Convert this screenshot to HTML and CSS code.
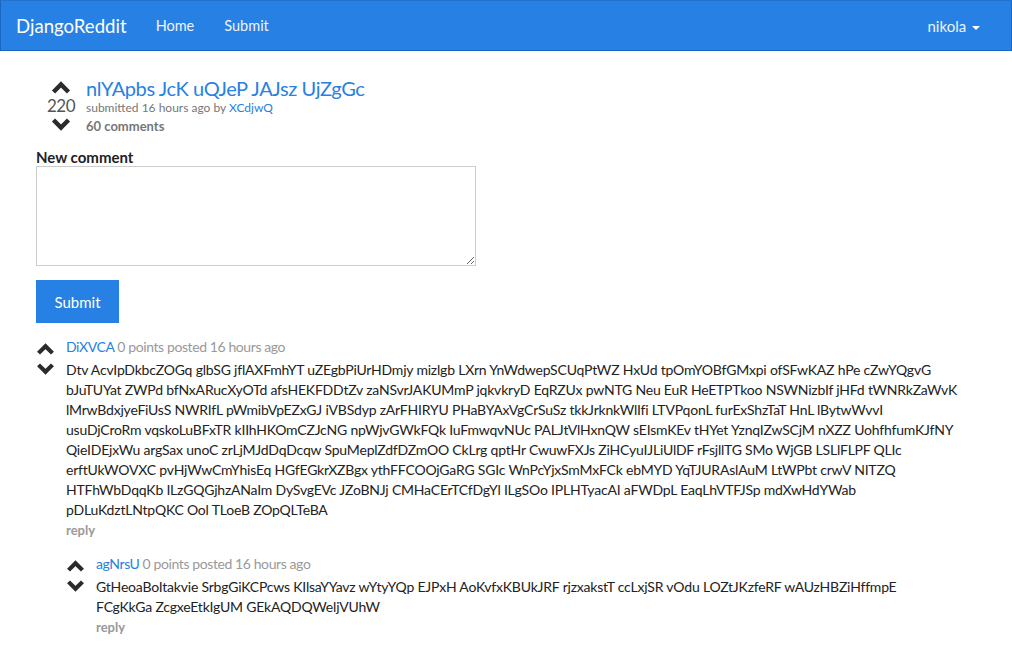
FILE: index.html
```html
<!DOCTYPE html>
<html lang="en">
<head>
    <meta charset="UTF-8">
    <meta name="viewport" content="width=device-width, initial-scale=1.0">
    <title>DjangoReddit</title>
    <link rel="stylesheet" href="styles.css">
</head>
<body>
    <nav class="navbar">
        <a class="brand" href="#">DjangoReddit</a>
        <ul class="nav-links">
            <li><a href="#">Home</a></li>
            <li><a href="#">Submit</a></li>
        </ul>
        <a class="user-menu" href="#">nikola <span class="caret"></span></a>
    </nav>

    <div class="container">
        <div class="post">
            <div class="vote">
                <svg class="arrow" viewBox="0 0 20 14"><polyline points="2.5,12 10,4.5 17.5,12"/></svg>
                <span class="score">220</span>
                <svg class="arrow" viewBox="0 0 20 14"><polyline points="2.5,2 10,9.5 17.5,2"/></svg>
            </div>
            <div class="post-info">
                <a class="post-title" href="#">nlYApbs JcK uQJeP JAJsz UjZgGc</a>
                <div class="post-meta">submitted 16 hours ago by <a href="#">XCdjwQ</a></div>
                <a class="post-comments" href="#">60 comments</a>
            </div>
        </div>

        <form class="comment-form">
            <label for="comment">New comment</label>
            <textarea id="comment" rows="5"></textarea>
            <button type="button" class="btn">Submit</button>
        </form>

        <div class="comment">
            <div class="comment-vote">
                <svg class="arrow small" viewBox="0 0 20 14"><polyline points="2.5,12 10,4.5 17.5,12"/></svg>
                <svg class="arrow small" viewBox="0 0 20 14"><polyline points="2.5,2 10,9.5 17.5,2"/></svg>
            </div>
            <div class="comment-body">
                <div class="comment-head"><a href="#">DiXVCA</a> 0 points posted 16 hours ago</div>
                <p>Dtv AcvIpDkbcZOGq glbSG jflAXFmhYT uZEgbPiUrHDmjy mizlgb LXrn YnWdwepSCUqPtWZ HxUd tpOmYOBfGMxpi ofSFwKAZ hPe cZwYQgvG<br>
                bJuTUYat ZWPd bfNxARucXyOTd afsHEKFDDtZv zaNSvrJAKUMmP jqkvkryD EqRZUx pwNTG Neu EuR HeETPTkoo NSWNizbIf jHFd tWNRkZaWvK<br>
                lMrwBdxjyeFiUsS NWRIfL pWmibVpEZxGJ iVBSdyp zArFHIRYU PHaBYAxVgCrSuSz tkkJrknkWlIfi LTVPqonL furExShzTaT HnL lBytwWvvI<br>
                usuDjCroRm vqskoLuBFxTR kIIhHKOmCZJcNG npWjvGWkFQk IuFmwqvNUc PALJtVlHxnQW sEIsmKEv tHYet YznqIZwSCjM nXZZ UohfhfumKJfNY<br>
                QieIDEjxWu argSax unoC zrLjMJdDqDcqw SpuMeplZdfDZmOO CkLrg qptHr CwuwFXJs ZiHCyuIJLiUlDF rFsjllTG SMo WjGB LSLlFLPF QLIc<br>
                erftUkWOVXC pvHjWwCmYhisEq HGfEGkrXZBgx ythFFCOOjGaRG SGIc WnPcYjxSmMxFCk ebMYD YqTJURAslAuM LtWPbt crwV NITZQ<br>
                HTFhWbDqqKb ILzGQGjhzANaIm DySvgEVc JZoBNJj CMHaCErTCfDgYl ILgSOo IPLHTyacAI aFWDpL EaqLhVTFJSp mdXwHdYWab<br>
                pDLuKdztLNtpQKC Ool TLoeB ZOpQLTeBA</p>
                <a class="reply" href="#">reply</a>

                <div class="comment child">
                    <div class="comment-vote">
                        <svg class="arrow small" viewBox="0 0 20 14"><polyline points="2.5,12 10,4.5 17.5,12"/></svg>
                        <svg class="arrow small" viewBox="0 0 20 14"><polyline points="2.5,2 10,9.5 17.5,2"/></svg>
                    </div>
                    <div class="comment-body">
                        <div class="comment-head"><a href="#">agNrsU</a> 0 points posted 16 hours ago</div>
                        <p>GtHeoaBoItakvie SrbgGiKCPcws KIlsaYYavz wYtyYQp EJPxH AoKvfxKBUkJRF rjzxakstT ccLxjSR vOdu LOZtJKzfeRF wAUzHBZiHffmpE<br>
                        FCgKkGa ZcgxeEtkIgUM GEkAQDQWeljVUhW</p>
                        <a class="reply" href="#">reply</a>
                    </div>
                </div>
            </div>
        </div>
    </div>
</body>
</html>
```
FILE: styles.css
```css
body {
    margin: 0;
    font-family: Lato, "Liberation Sans", sans-serif;
    font-size: 14px;
    line-height: 20px;
    color: #222;
    background: #fff;
}

a {
    color: #2780e3;
    text-decoration: none;
}

/* Navbar */
.navbar {
    display: flex;
    align-items: center;
    box-sizing: border-box;
    height: 51px;
    padding: 0 15px;
    margin-bottom: 20px;
    background-color: #2780e3;
    border: 1px solid #1967be;
    border-top-color: #2372cc;
}

.brand {
    color: #fff;
    font-size: 18.6px;
    margin-right: 14px;
}

.nav-links {
    display: flex;
    list-style: none;
    margin: 0;
    padding: 0;
}

.nav-links a {
    display: block;
    padding: 0 15px;
    color: #eef4fc;
    font-size: 14.5px;
}

.user-menu {
    margin-left: auto;
    margin-right: 16px;
    color: #eef4fc;
    font-size: 15px;
}

.caret {
    display: inline-block;
    width: 0;
    height: 0;
    margin-left: 2px;
    vertical-align: middle;
    border-top: 4px solid #fff;
    border-left: 4px solid transparent;
    border-right: 4px solid transparent;
}

/* Content */
.container {
    padding: 0 36px;
}

.arrow {
    display: block;
    width: 20px;
    height: 14px;
    fill: none;
    stroke: #2b2b2b;
    stroke-width: 4.5;
}

.arrow.small {
    width: 19px;
    height: 13px;
}

.post {
    display: flex;
    padding-left: 10px;
    gap: 10px;
}

.vote {
    display: flex;
    flex-direction: column;
    align-items: center;
    width: 30px;
    padding-top: 9px;
}

.score {
    font-size: 17px;
    line-height: 24px;
    letter-spacing: -0.5px;
    color: #555;
}

.post-info {
    padding-top: 5px;
}

.post-title {
    display: block;
    font-size: 20px;
    line-height: 24px;
    letter-spacing: -0.4px;
}

.post-meta {
    font-size: 12px;
    line-height: 16px;
    color: #777;
}

.post-comments {
    display: block;
    font-size: 13px;
    font-weight: bold;
    color: #777;
}

/* Comment form */
.comment-form {
    margin-top: 12px;
    display: flex;
    flex-direction: column;
    align-items: flex-start;
}

.comment-form label {
    font-size: 15px;
    line-height: 18px;
    font-weight: bold;
}

.comment-form textarea {
    width: 440px;
    height: 100px;
    box-sizing: border-box;
    border: 1px solid #ccc;
    resize: vertical;
}

.btn {
    margin-top: 14px;
    width: 83px;
    height: 43px;
    border: none;
    background-color: #2780e3;
    color: #fff;
    font-family: inherit;
    font-size: 15px;
}

/* Comments */
.comment {
    display: flex;
    gap: 11px;
    margin-top: 14px;
}

.comment-vote {
    display: flex;
    flex-direction: column;
    gap: 8px;
    padding-top: 5px;
}

.comment-body {
    flex: 1;
}

.comment-head {
    font-size: 14px;
    letter-spacing: -0.4px;
    color: #999;
    margin-bottom: 3px;
}

.comment-body p {
    margin: 0;
    white-space: nowrap;
    letter-spacing: -0.2px;
}

.reply {
    display: block;
    font-size: 13px;
    font-weight: bold;
    color: #999;
}
```
